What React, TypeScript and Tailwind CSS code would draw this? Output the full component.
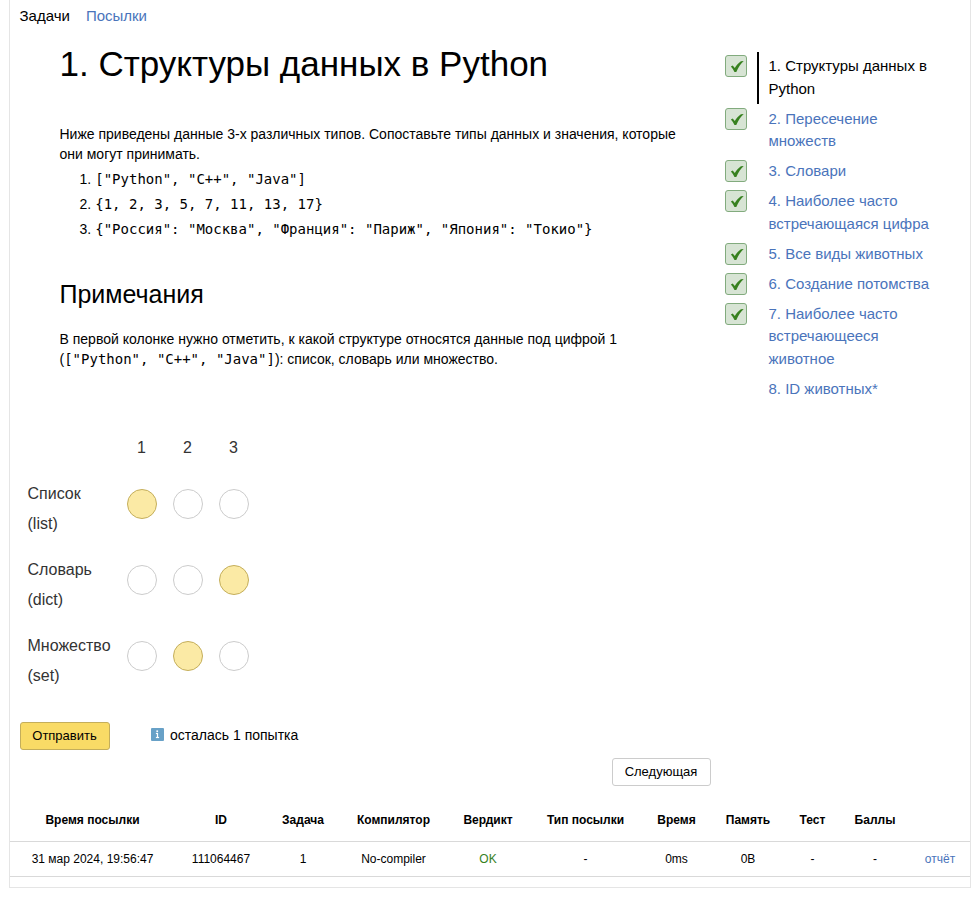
const tasks = [
  { lines: ['1. Структуры данных в', 'Python'], done: true, active: true },
  { lines: ['2. Пересечение', 'множеств'], done: true },
  { lines: ['3. Словари'], done: true },
  { lines: ['4. Наиболее часто', 'встречающаяся цифра'], done: true },
  { lines: ['5. Все виды животных'], done: true },
  { lines: ['6. Создание потомства'], done: true },
  { lines: ['7. Наиболее часто', 'встречающееся', 'животное'], done: true },
  { lines: ['8. ID животных*'], done: false },
];

const literals = [
  '["Python", "C++", "Java"]',
  '{1, 2, 3, 5, 7, 11, 13, 17}',
  '{"Россия": "Москва", "Франция": "Париж", "Япония": "Токио"}',
];

const matches = [
  { name: 'Список', type: '(list)', selected: 1 },
  { name: 'Словарь', type: '(dict)', selected: 3 },
  { name: 'Множество', type: '(set)', selected: 2 },
];

const columns = [
  { title: 'Время посылки', value: '31 мар 2024, 19:56:47', width: 'w-[164px] pl-px' },
  { title: 'ID', value: '111064467', width: 'w-[94px]' },
  { title: 'Задача', value: '1', width: 'w-[70px]' },
  { title: 'Компилятор', value: 'No-compiler', width: 'w-[110px] pl-px' },
  { title: 'Вердикт', value: 'OK', width: 'w-[80px]' },
  { title: 'Тип посылки', value: '-', width: 'w-[115px]' },
  { title: 'Время', value: '0ms', width: 'w-[66px] pl-px' },
  { title: 'Память', value: '0B', width: 'w-[78px]' },
  { title: 'Тест', value: '-', width: 'w-[51px]' },
  { title: 'Баллы', value: '-', width: 'w-[74px]' },
  { title: '', value: 'отчёт', width: 'w-[58px]' },
];

function DoneMark() {
  return (
    <span className="mt-[3px] block size-[22px] rounded-[3px] border border-[#82ab7e] bg-[#d7e4d4]">
      <svg viewBox="0 0 20 20" className="size-5" aria-hidden="true">
        <path d="M4.9 10.4 6.7 9.5 8.8 12C10.4 9.4 12.4 7.1 14.9 5.3L17.7 4.9C14.7 7.8 12.3 11.3 10.3 15.9H8.5C7.5 13.8 6.3 12 4.9 10.4Z" fill="#37811f" />
      </svg>
    </span>
  );
}

function TaskList() {
  return (
    <ul className="mt-[22px] text-[15px] leading-[22.5px]">
      {tasks.map((task) => (
        <li key={task.lines[0]} className="flex">
          <div className="w-8">{task.done && <DoneMark />}</div>
          <a
            className={
              task.active
                ? 'mb-[0.5px] border-l-2 border-black pb-1 pl-[9.5px] pt-[3px] text-black'
                : 'border-l-2 border-transparent pb-[4.5px] pl-[9.5px] pt-[3px] text-[#4a74bb]'
            }
          >
            {task.lines.map((line) => (
              <span key={line} className="block whitespace-nowrap">{line}</span>
            ))}
          </a>
        </li>
      ))}
    </ul>
  );
}

function MatchingForm() {
  return (
    <div className="ml-[17.5px] pt-px text-base leading-[30px] text-[#333]">
      <div className="flex h-[46px] pl-[99px]">
        {[1, 2, 3].map((n) => (
          <span key={n} className="mr-4 w-[30px] text-center">{n}</span>
        ))}
      </div>
      {matches.map((row) => (
        <div key={row.name} className="flex h-[76px]">
          <div className="w-[99.5px]">
            <div>{row.name}</div>
            <div>{row.type}</div>
          </div>
          <div className="flex gap-4 pt-[10px]">
            {[1, 2, 3].map((n) => (
              <span
                key={n}
                className={
                  row.selected === n
                    ? 'size-[30px] rounded-full border border-[#c4ae5b] bg-[#fbeaa5]'
                    : 'size-[30px] rounded-full border border-[#ccc] bg-white'
                }
              />
            ))}
          </div>
        </div>
      ))}
    </div>
  );
}

function Submissions() {
  return (
    <div className="text-xs">
      <div className="flex h-[44px] items-center border-b border-[#d9d9d9] font-bold">
        {columns.map((c, i) => (
          <div key={i} className={`${c.width} shrink-0 text-center`}>{c.title}</div>
        ))}
      </div>
      <div className="flex h-[35px] items-center border-b border-[#d9d9d9]">
        {columns.map((c, i) => (
          <div
            key={i}
            className={`${c.width} shrink-0 text-center ${c.value === 'OK' ? 'text-[#37811f]' : ''} ${c.value === 'отчёт' ? 'pr-[2px] text-[#4a74bb]' : ''}`}
          >
            {c.value}
          </div>
        ))}
      </div>
    </div>
  );
}

export default function App() {
  return (
    <div className="h-[905px] bg-white pl-[9px] font-['Liberation_Sans',Arial,sans-serif] text-black">
      <main className="flex h-[888px] w-[962px] flex-col border-x border-b border-[#e5e5e5]">
        <nav className="flex h-[30px] gap-4 pl-[9.5px] pt-[5px] text-[15px] leading-[22px]">
          <a>Задачи</a>
          <a className="text-[#4a74bb]">Посылки</a>
        </nav>
        <div className="flex h-[402px]">
          <article className="w-[715px] pl-[49.5px] text-sm leading-5">
            <h1 className="mt-[13px] text-[35px] leading-[42px]">1. Структуры данных в Python</h1>
            <p className="mt-[39px] w-[630px]">
              Ниже приведены данные 3-х различных типов. Сопоставьте типы данных и значения, которые они могут принимать.
            </p>
            <ol className="mt-[5px] pl-5">
              {literals.map((text, i) => (
                <li key={text} className="flex h-[25px] gap-1">
                  <span className="w-[11.75px] whitespace-nowrap">{i + 1}.</span>
                  <code className="font-['DejaVu_Sans_Mono',monospace] text-sm leading-5">{text}</code>
                </li>
              ))}
            </ol>
            <h2 className="mt-[34px] text-[25px] leading-[32px]">Примечания</h2>
            <p className="mt-[19px] w-[600px]">
              В первой колонке нужно отметить, к какой структуре относятся данные под цифрой 1 (
              <code className="font-['DejaVu_Sans_Mono',monospace] text-sm leading-5">["Python", "C++", "Java"]</code>
              ): список, словарь или множество.
            </p>
          </article>
          <aside className="flex-1">
            <TaskList />
          </aside>
        </div>
        <MatchingForm />
        <div className="mt-[15px] flex items-center pl-[10px]">
          <button className="h-7 w-[90px] rounded-[3px] border border-[#c4ae5b] bg-[#f9db66] pr-px text-[13px]">Отправить</button>
          <svg viewBox="0 0 13 13" className="mb-[3px] ml-[41px] size-[13px]" aria-hidden="true">
            <rect width="13" height="13" rx="1" fill="#68a1c7" />
            <path d="M5.5 2.5H7V4H5.5zM5 5h2v4h1v1H5V9h1V6H5z" fill="#fff" stroke="#fff" strokeWidth="0.2" />
          </svg>
          <span className="mb-[3px] ml-[6px] text-sm">осталась 1 попытка</span>
        </div>
        <button className="ml-[602px] mt-2 h-7 w-[99px] shrink-0 rounded-[3px] border border-[#ccc] bg-white pr-px text-[13px]">Следующая</button>
        <div className="mt-3">
          <Submissions />
        </div>
      </main>
    </div>
  );
}
